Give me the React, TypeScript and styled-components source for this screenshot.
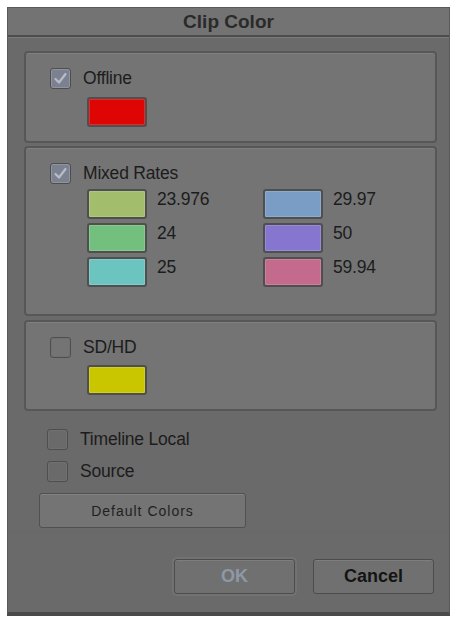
import React from 'react';
import styled, { createGlobalStyle } from 'styled-components';

const GlobalStyle = createGlobalStyle`
  html, body {
    margin: 0;
    padding: 0;
    background: #ffffff;
  }
  body {
    font-family: "Liberation Sans", Arial, sans-serif;
  }
`;

const Dialog = styled.div`
  margin: 7px 0 0 7px;
  width: 443px;
  height: 609px;
  box-sizing: border-box;
  border: 1px solid #595959;
  border-bottom: 4px solid #4a4a4a;
  background: #6a6a6a;
  display: flex;
  flex-direction: column;
`;

const TitleBar = styled.div`
  height: 27px;
  border-bottom: 2px solid #4c4c4c;
  background: #737373;
  display: flex;
  align-items: center;
  justify-content: center;
  font-size: 19px;
  font-weight: bold;
  color: #2a2a2a;
`;

const Body = styled.div`
  flex: 1;
  display: flex;
  flex-direction: column;
  padding: 13px 12px 0 16px;
  border-top: 1px solid #7a7a7a;
`;

const Panel = styled.div<{ $h: number; $mt?: number }>`
  height: ${(p) => p.$h}px;
  margin-top: ${(p) => p.$mt ?? 0}px;
  box-sizing: border-box;
  border: 2px solid #575757;
  border-radius: 4px;
  background: #747474;
  padding: 14px 0 0 24px;
  box-shadow: inset 0 1px 0 #808080;
`;

const CheckRow = styled.div<{ $gap?: number }>`
  display: flex;
  align-items: center;
  gap: ${(p) => p.$gap ?? 12}px;
  height: 22px;
`;

const Box = styled.div<{ $checked?: boolean }>`
  width: 19px;
  height: 19px;
  border: 1px solid #4e4e4e;
  border-radius: 3px;
  background: ${(p) => (p.$checked ? '#7c8190' : 'transparent')};
  box-shadow: inset 0 0 0 1px ${(p) => (p.$checked ? '#8f94a2' : '#707070')};
  display: flex;
  align-items: center;
  justify-content: center;
`;

const Label = styled.span`
  font-size: 17.5px;
  color: #1c1c1c;
  letter-spacing: -0.2px;
`;

const Swatch = styled.div<{ $color: string }>`
  width: 56px;
  height: 26px;
  border: 2px solid #4f4f4f;
  border-radius: 3px;
  background: ${(p) => p.$color};
  box-shadow: inset 0 0 0 1px rgba(255, 255, 255, 0.15);
  flex-shrink: 0;
`;

const SwatchSlot = styled.div<{ $mt: number }>`
  margin: ${(p) => p.$mt}px 0 0 37px;
`;

const RateGrid = styled.div`
  margin: 5px 0 0 37px;
  display: grid;
  grid-template-columns: 176px 120px;
  row-gap: 3px;
`;

const RateItem = styled.div`
  display: flex;
  align-items: flex-start;
  gap: 10px;
  height: 31px;
`;

const RateText = styled.span`
  font-size: 17.5px;
  color: #1c1c1c;
  line-height: 20px;
  letter-spacing: -0.2px;
`;

const Lower = styled.div`
  padding: 17px 0 0 23px;
  display: flex;
  flex-direction: column;
  gap: 10px;
`;

const DefaultButton = styled.button`
  margin: 1px 0 0 -8px;
  width: 207px;
  height: 35px;
  border: 1px solid #505050;
  border-radius: 3px;
  background: #747474;
  box-shadow: inset 0 1px 0 #848484;
  font-family: "Liberation Sans", Arial, sans-serif;
  font-size: 14px;
  letter-spacing: 1px;
  color: #1f1f1f;
  padding: 0;
`;

const Footer = styled.div`
  margin-top: auto;
  border-top: 1px solid #686868;
  display: flex;
  justify-content: flex-end;
  gap: 18px;
  padding: 26px 15px 18px 0;
`;

const DialogButton = styled.button<{ $disabled?: boolean }>`
  width: 121px;
  height: 35px;
  border: 1px solid #4c4c4c;
  border-radius: 3px;
  background: #707070;
  box-shadow: ${(p) =>
    p.$disabled ? '0 0 0 2px #727272, inset 0 1px 0 #7e7e7e' : 'inset 0 1px 0 #7e7e7e'};
  font-family: "Liberation Sans", Arial, sans-serif;
  font-size: 18px;
  font-weight: bold;
  color: ${(p) => (p.$disabled ? '#8d99a6' : '#141414')};
  padding: 0;
`;

const Check = () => (
  <svg width="15" height="15" viewBox="0 0 15 15">
    <path d="M2.5 8 L6 11.5 L12.5 3" fill="none" stroke="#b8bcc8" strokeWidth="2.2" strokeLinecap="round" strokeLinejoin="round" />
  </svg>
);

const rates = [
  { label: '23.976', color: '#a2bd6c' },
  { label: '29.97', color: '#7a9dc6' },
  { label: '24', color: '#73c07e' },
  { label: '50', color: '#8776cf' },
  { label: '25', color: '#6cc4c0' },
  { label: '59.94', color: '#c46a8c' },
];

export default function App() {
  return (
    <>
      <GlobalStyle />
      <Dialog>
        <TitleBar>Clip Color</TitleBar>
        <Body>
          <Panel $h={92}>
            <CheckRow>
              <Box $checked>
                <Check />
              </Box>
              <Label>Offline</Label>
            </CheckRow>
            <SwatchSlot $mt={8}>
              <Swatch $color="#e00505" />
            </SwatchSlot>
          </Panel>

          <Panel $h={170} $mt={3}>
            <CheckRow>
              <Box $checked>
                <Check />
              </Box>
              <Label>Mixed Rates</Label>
            </CheckRow>
            <RateGrid>
              {rates.map((r) => (
                <RateItem key={r.label}>
                  <Swatch $color={r.color} />
                  <RateText>{r.label}</RateText>
                </RateItem>
              ))}
            </RateGrid>
          </Panel>

          <Panel $h={91} $mt={4}>
            <CheckRow>
              <Box />
              <Label>SD/HD</Label>
            </CheckRow>
            <SwatchSlot $mt={7}>
              <Swatch $color="#c9c600" />
            </SwatchSlot>
          </Panel>

          <Lower>
            <CheckRow>
              <Box />
              <Label>Timeline Local</Label>
            </CheckRow>
            <CheckRow>
              <Box />
              <Label>Source</Label>
            </CheckRow>
            <DefaultButton>Default Colors</DefaultButton>
          </Lower>
        </Body>
        <Footer>
          <DialogButton $disabled>OK</DialogButton>
          <DialogButton>Cancel</DialogButton>
        </Footer>
      </Dialog>
    </>
  );
}
